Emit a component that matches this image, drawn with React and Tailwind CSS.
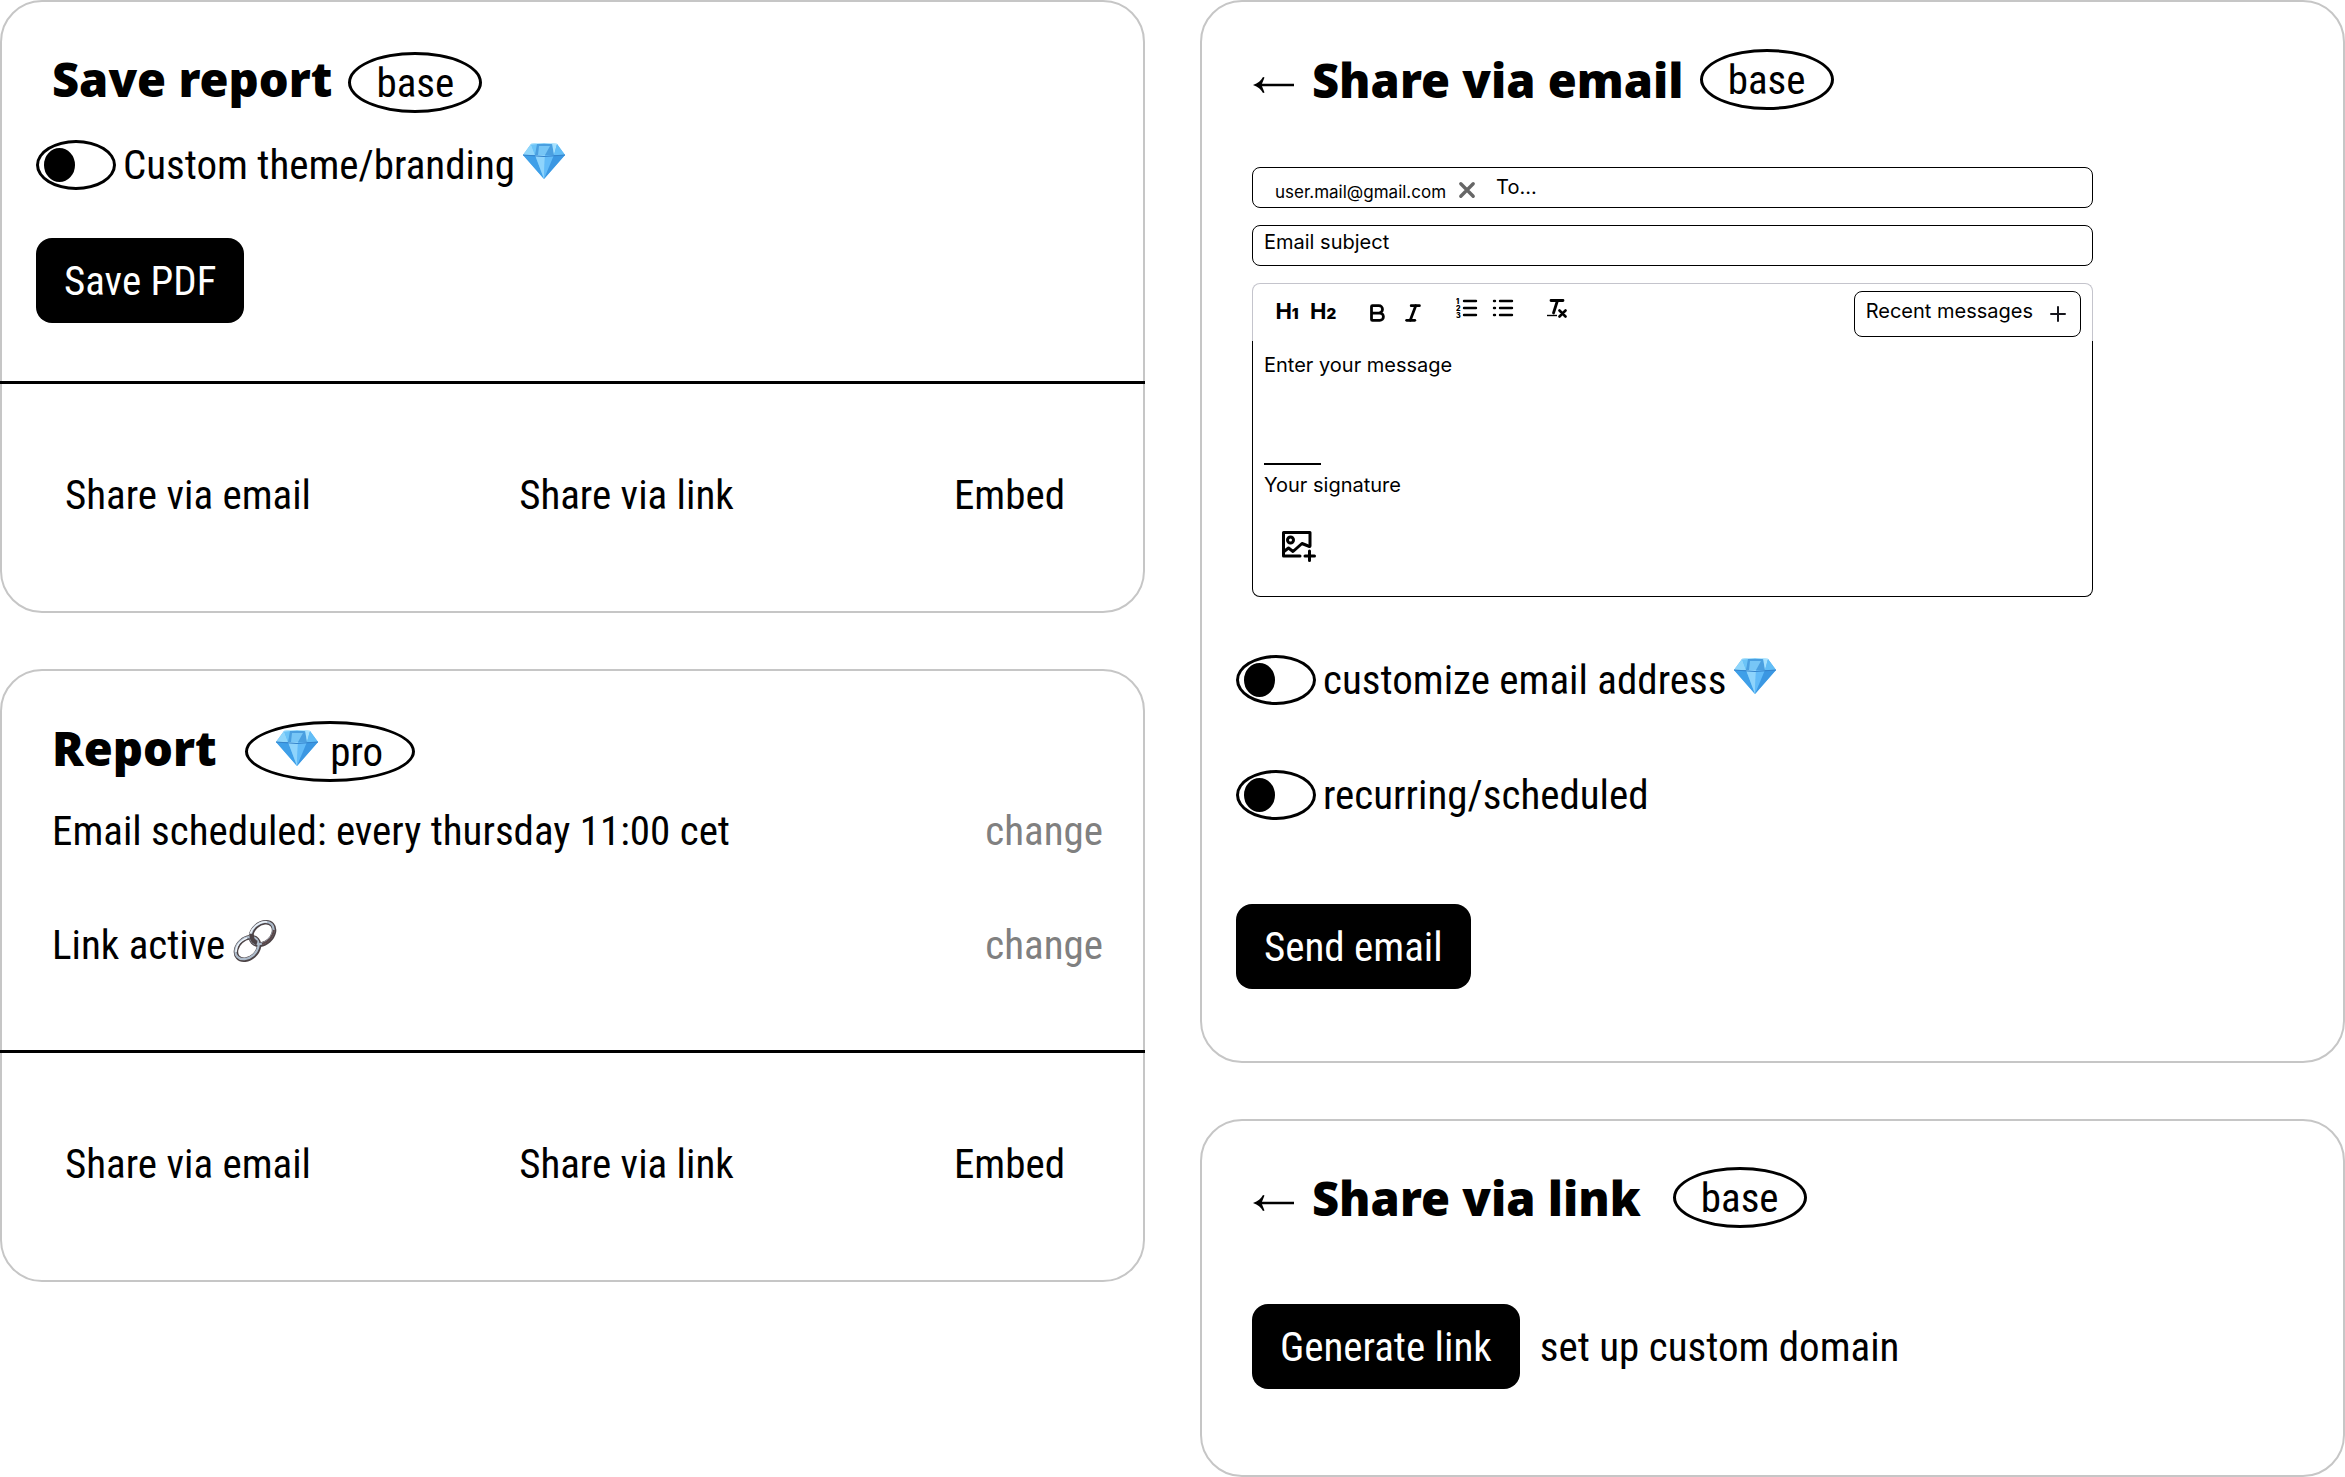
import { Bold, Italic } from 'lucide-react';
import { useId } from 'react';

export default function App() {
  return (
    <main className="grid grid-cols-2 items-start gap-x-[55px] bg-white font-['Roboto_Condensed','Liberation_Sans_Narrow','Liberation_Sans',sans-serif] text-[41px] leading-[58px] text-black">
      <div className="flex flex-col gap-14">
        <SaveReport />
        <ScheduledReport />
      </div>
      <div className="flex flex-col gap-14">
        <ShareViaEmail />
        <ShareViaLink />
      </div>
    </main>
  );
}

function SaveReport() {
  return (
    <Card>
      <div className="px-[34px] pt-[50px] pb-[58px]">
        <div className="flex items-baseline gap-4 pl-4">
          <Title>Save report</Title>
          <Badge>base</Badge>
        </div>
        <div className="mt-[23px]">
          <Toggle premium>Custom theme/branding</Toggle>
        </div>
        <div className="mt-11">
          <PrimaryButton>Save PDF</PrimaryButton>
        </div>
      </div>
      <ShareLinks />
    </Card>
  );
}

function ScheduledReport() {
  return (
    <Card>
      <div className="pr-10 pl-[50px] pt-[50px] pb-[76px]">
        <div className="flex items-baseline gap-7">
          <Title>Report</Title>
          <Badge wide>
            <Diamond />
            pro
          </Badge>
        </div>
        <div className="mt-5 flex justify-between">
          <p>Email scheduled: every thursday 11:00 cet</p>
          <ChangeButton />
        </div>
        <div className="mt-14 flex justify-between">
          <p className="flex items-center gap-2">
            Link active
            <Chain />
          </p>
          <ChangeButton />
        </div>
      </div>
      <ShareLinks />
    </Card>
  );
}

function ShareViaEmail() {
  return (
    <Card>
      <div className="px-[34px] pt-[47px] pb-[72px]">
        <div className="flex items-center gap-4 pl-4">
          <BackButton />
          <Title>Share via email</Title>
          <Badge>base</Badge>
        </div>
        <EmailForm />
        <div className="mt-[54px] flex flex-col gap-[57px]">
          <Toggle premium>customize email address</Toggle>
          <Toggle>recurring/scheduled</Toggle>
        </div>
        <div className="mt-20">
          <PrimaryButton>Send email</PrimaryButton>
        </div>
      </div>
    </Card>
  );
}

function ShareViaLink() {
  return (
    <Card>
      <div className="px-[50px] pt-[46px] pb-[86px]">
        <div className="flex items-center gap-4">
          <BackButton />
          <Title>Share via link</Title>
          <div className="pl-4">
            <Badge>base</Badge>
          </div>
        </div>
        <div className="mt-[76px] flex items-center gap-5">
          <PrimaryButton>Generate link</PrimaryButton>
          <a href="#domain">set up custom domain</a>
        </div>
      </div>
    </Card>
  );
}

function EmailForm() {
  return (
    <form className="mt-[57px] ml-4 flex max-w-[841px] flex-col gap-[17px] font-['Inter',sans-serif] text-xl leading-7">
      <div className="flex h-[41px] items-center rounded-lg border border-black pl-[22px]">
        <span className="pt-2 text-[17px] leading-6">user.mail@gmail.com</span>
        <button
          type="button"
          aria-label="Remove recipient"
          className="ml-3 pt-1"
        >
          <svg viewBox="0 0 16 16" className="size-[18px]">
            <path
              d="M2.5 2.5l11 11M13.5 2.5l-11 11"
              stroke="#666"
              strokeWidth="3"
              strokeLinecap="round"
            />
          </svg>
        </button>
        <input
          aria-label="To"
          placeholder="To..."
          className="ml-5 min-w-0 flex-1 pb-0.5 outline-none placeholder:text-black"
        />
      </div>
      <input
        aria-label="Email subject"
        placeholder="Email subject"
        className="h-[41px] rounded-lg border border-black px-[11px] pb-2 outline-none placeholder:text-black"
      />
      <div>
        <Toolbar />
        <div className="rounded-b-lg border border-t-0 border-black px-[11px] pt-2.5 pb-[34px]">
          <textarea
            aria-label="Message"
            placeholder="Enter your message"
            className="block h-28 w-full resize-none outline-none placeholder:text-black"
          />
          <hr className="mb-1.5 w-[57px] border-t-2 border-black" />
          <input
            aria-label="Signature"
            placeholder="Your signature"
            className="block w-full outline-none placeholder:text-black"
          />
          <button
            type="button"
            aria-label="Add image"
            className="mt-8 ml-[18px] block"
          >
            <ImageAdd />
          </button>
        </div>
      </div>
    </form>
  );
}

function Toolbar() {
  return (
    <div className="flex h-[58px] items-center gap-[30px] rounded-t-lg border border-b-0 border-[#c4c4cc] pr-[11px] pl-[22px]">
      <div className="flex gap-3">
        <ToolButton label="Heading 1">
          <HeadingMark level="1" />
        </ToolButton>
        <ToolButton label="Heading 2">
          <HeadingMark level="2" />
        </ToolButton>
      </div>
      <div className="flex gap-3">
        <ToolButton label="Bold">
          <Bold size={22} strokeWidth={3} />
        </ToolButton>
        <ToolButton label="Italic">
          <Italic size={22} strokeWidth={3} />
        </ToolButton>
      </div>
      <div className="flex gap-3 pb-2.5">
        <ToolButton label="Numbered list">
          <NumberedList />
        </ToolButton>
        <ToolButton label="Bulleted list">
          <BulletedList />
        </ToolButton>
      </div>
      <div className="pb-2.5">
        <ToolButton label="Clear formatting">
          <ClearFormat />
        </ToolButton>
      </div>
      <button
        type="button"
        className="mt-0.5 ml-auto flex h-[46px] items-center gap-[17px] rounded-lg border border-black pr-3.5 pl-[11px]"
      >
        <span className="pb-1.5">Recent messages</span>
        <svg viewBox="0 0 16 16" className="size-4">
          <path
            d="M8 1v14M1 8h14"
            stroke="#16161d"
            strokeWidth="2"
            strokeLinecap="round"
          />
        </svg>
      </button>
    </div>
  );
}

function ToolButton({ label, children }) {
  return (
    <button
      type="button"
      aria-label={label}
      className="flex size-6 items-center justify-center"
    >
      {children}
    </button>
  );
}

function HeadingMark({ level }) {
  return (
    <span className="flex items-baseline text-[22px] leading-6 font-bold">
      H<span className="text-[15px] font-black">{level}</span>
    </span>
  );
}

function Card({ children }) {
  return (
    <section className="rounded-[42px] border-2 border-[#c6c6c6]">
      {children}
    </section>
  );
}

function Title({ children }) {
  return (
    <h2 className="font-['Noto_Sans',sans-serif] text-[47px] leading-[46px] font-black whitespace-nowrap">
      {children}
    </h2>
  );
}

function Badge({ wide, children }) {
  return (
    <span
      className={`flex h-[61px] items-center justify-center gap-3 rounded-[50%] border-[3px] border-black ${
        wide ? 'w-[170px]' : 'w-[134px]'
      }`}
    >
      {children}
    </span>
  );
}

function Toggle({ premium, children }) {
  const id = useId();

  return (
    <div className="flex items-center">
      <input
        id={id}
        type="checkbox"
        className="flex h-[50px] w-20 appearance-none items-center rounded-[50%] border-[3px] border-black px-[5px] before:h-[34px] before:w-[31px] before:rounded-[50%] before:bg-black before:content-[''] checked:justify-end"
      />
      <label htmlFor={id} className="flex items-center gap-2 pl-[7px]">
        {children}
        {premium && <Diamond />}
      </label>
    </div>
  );
}

function PrimaryButton({ children }) {
  return (
    <button
      type="button"
      className="h-[85px] rounded-2xl bg-black px-7 whitespace-nowrap text-white"
    >
      {children}
    </button>
  );
}

function ChangeButton() {
  return (
    <button type="button" className="text-[#808080]">
      change
    </button>
  );
}

function BackButton() {
  return (
    <button type="button" aria-label="Back" className="pt-2.5">
      <svg viewBox="0 0 44 18" className="h-[18px] w-11">
        <path d="M6 9H42" stroke="black" strokeWidth="2.4" />
        <path d="M1 9C6 7.500 9 4.500 11 1L12.500 1.500C11.500 4 10.500 6.500 9.500 9C10.500 11.500 11.500 14 12.500 16.500L11 17C9 13.500 6 10.500 1 9Z" />
      </svg>
    </button>
  );
}

function ShareLinks() {
  return (
    <nav className="-mx-0.5 flex justify-between border-t-[3px] border-black pt-[82px] pr-20 pb-[87px] pl-[65px]">
      <a href="#email">Share via email</a>
      <a href="#link" className="pr-3">
        Share via link
      </a>
      <a href="#embed">Embed</a>
    </nav>
  );
}

function Diamond() {
  return (
    <svg viewBox="0 0 42 36" className="mb-2 h-9 w-[42px]">
      <path d="M8 1Q21 -1 34 1L42 12L21 36L0 12Z" fill="#5bb8f5" />
      <path d="M8 1L12 12H0Z" fill="#8fd6fb" />
      <path d="M8 1Q12 0 16 0L12 12Z" fill="#6cc4f7" />
      <path d="M14 1H29L31 12H12Z" fill="#4a9fe0" />
      <path d="M16 3H27L22 12H15Z" fill="#77c6f6" />
      <path d="M29 0L34 1L31 12Z" fill="#a5e0fd" />
      <path d="M34 1L42 12H31Z" fill="#62bdf6" />
      <path d="M0 12H12L21 36Z" fill="#3f9fe8" />
      <path d="M12 12H22L21 36Z" fill="#8ed4fc" />
      <path d="M22 12H31L21 36Z" fill="#62bbf8" />
      <path d="M31 12H42L21 36Z" fill="#3b97e2" />
      <path d="M0 12Q21 15 42 12" fill="none" stroke="#3483cb" />
      <path d="M8 1Q21 -1 34 1" fill="none" stroke="#b9e8fd" />
    </svg>
  );
}

function Chain() {
  return (
    <svg viewBox="0 0 44 44" className="mb-2 size-11" fill="none">
      <g strokeWidth="4.500" stroke="#4c4346">
        <ellipse cx="29.500" cy="14.500" rx="13" ry="9.500" transform="rotate(-42 29.500 14.500)" />
        <ellipse cx="14.500" cy="29.500" rx="13" ry="9.500" transform="rotate(-42 14.500 29.500)" />
      </g>
      <g strokeWidth="2.200" stroke="#aebccb">
        <ellipse cx="29" cy="14" rx="13" ry="9.500" transform="rotate(-42 29 14)" />
        <ellipse cx="14" cy="29" rx="13" ry="9.500" transform="rotate(-42 14 29)" />
      </g>
      <path d="M17 15C20 7 28 2 34 3M3 33C3 26 8 21 14 19" stroke="#eef4fa" strokeWidth="1.500" />
      <path d="M19 15C18 19 20 23 24 24" stroke="#4c4346" strokeWidth="4.500" />
      <path d="M41 11C40 18 35 23 29 25" stroke="#5b484a" strokeWidth="2" />
    </svg>
  );
}

function NumberedList() {
  return (
    <svg viewBox="0 0 22 20" className="h-5 w-[22px]">
      <path
        d="M8 3h12M8 10h12M8 17h12"
        stroke="black"
        strokeWidth="2.400"
        strokeLinecap="round"
      />
      <g fontSize="7" fontWeight="900">
        <text x="0" y="5.500">1</text>
        <text x="0" y="12.500">2</text>
        <text x="0" y="19.500">3</text>
      </g>
    </svg>
  );
}

function BulletedList() {
  return (
    <svg viewBox="0 0 22 20" className="h-5 w-[22px]">
      <path
        d="M8 3h12M8 10h12M8 17h12M2 3h1M2 10h1M2 17h1"
        stroke="black"
        strokeWidth="2.400"
        strokeLinecap="round"
      />
    </svg>
  );
}

function ClearFormat() {
  return (
    <svg viewBox="0 0 22 20" className="h-5 w-[22px]" fill="none" stroke="black">
      <path d="M5 2.500H17M11.500 2.500L7.500 15" strokeWidth="2.800" strokeLinecap="round" />
      <path d="M1 17.500H11" strokeWidth="1.400" />
      <path d="M13.500 12.500l6 6M19.500 12.500l-6 6" strokeWidth="2.600" strokeLinecap="round" />
    </svg>
  );
}

function ImageAdd() {
  return (
    <svg
      viewBox="0 0 34 31"
      className="h-[31px] w-[34px]"
      fill="none"
      stroke="black"
      strokeWidth="3"
      strokeLinecap="round"
      strokeLinejoin="round"
    >
      <path d="M18 25H1.500V1.500H28V15" />
      <path d="M2 20.500L6.500 17L11 20.500L20 12.500L27.500 15.500" />
      <circle cx="8.500" cy="9" r="3" />
      <path d="M27.500 20v9.500M23 25h9.500" />
    </svg>
  );
}
